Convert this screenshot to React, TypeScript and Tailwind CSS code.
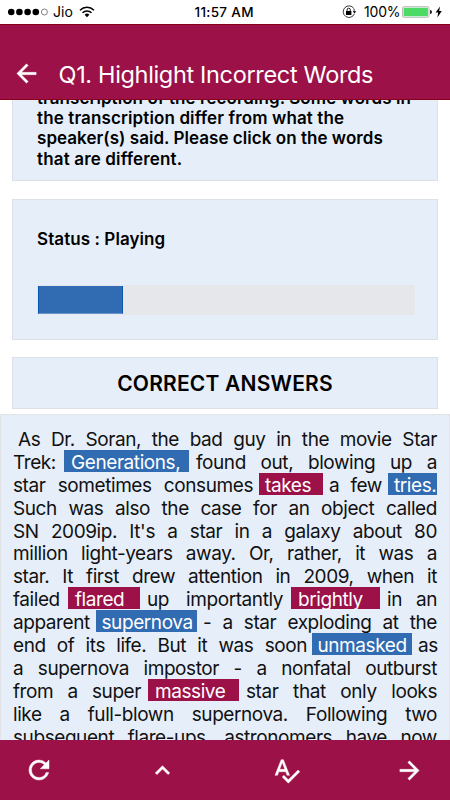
import React from "react";
import { MdArrowBack, MdArrowForward, MdExpandLess, MdRefresh, MdSpellcheck } from "react-icons/md";

type Part = { text: string; gap?: number; width: number; mark?: "blue" | "red"; pad?: number };

const lines: Part[][] = [
  [{ text: "As Dr. Soran, the bad guy in the movie Star", gap: 5, width: 419 }],
  [
    { text: "Trek:", width: 42 },
    { text: "Generations,", gap: 9, width: 125, mark: "blue", pad: 7 },
    { text: "found out, blowing up a", gap: 7, width: 241 },
  ],
  [
    { text: "star sometimes consumes", width: 240 },
    { text: "takes", gap: 6, width: 64, mark: "red", pad: 6 },
    { text: "a few", gap: 6, width: 53 },
    { text: "tries.", gap: 6, width: 49, mark: "blue", pad: 6 },
  ],
  [{ text: "Such was also the case for an object called", width: 424 }],
  [{ text: "SN 2009ip. It's a star in a galaxy about 80", width: 424 }],
  [{ text: "million light-years away. Or, rather, it was a", width: 424 }],
  [{ text: "star. It first drew attention in 2009, when it", width: 424 }],
  [
    { text: "failed", width: 47 },
    { text: "flared", gap: 8, width: 72, mark: "red", pad: 7 },
    { text: "up importantly", gap: 7, width: 136 },
    { text: "brightly", gap: 8, width: 89, mark: "red", pad: 7 },
    { text: "in an", gap: 7, width: 50 },
  ],
  [
    { text: "apparent", width: 78 },
    { text: "supernova", gap: 5, width: 101, mark: "blue", pad: 5.5 },
    { text: "- a star exploding at the", gap: 6, width: 234 },
  ],
  [
    { text: "end of its life. But it was soon", width: 294 },
    { text: "unmasked", gap: 5, width: 100, mark: "blue", pad: 5.5 },
    { text: "as", gap: 6, width: 19 },
  ],
  [{ text: "a supernova impostor - a nonfatal outburst", width: 424 }],
  [
    { text: "from a super", width: 128 },
    { text: "massive", gap: 7, width: 91, mark: "red", pad: 7 },
    { text: "star that only looks", gap: 7, width: 191 },
  ],
  [{ text: "like a full-blown supernova. Following two", width: 424 }],
  [{ text: "subsequent flare-ups, astronomers have now", width: 424 }],
];

const markClass = { blue: "bg-[#316bb1] text-white", red: "bg-[#9c1147] text-white" };

function StatusBar() {
  return (
    <div className="flex h-6 shrink-0 items-center bg-white pl-2 text-[14px] leading-6 text-black">
      <svg width="41" height="8" viewBox="0 0 41 8">
        {[3.2, 11.4, 19.6, 27.8].map((x) => (
          <circle key={x} cx={x} cy="4" r="3.3" />
        ))}
        <circle cx="36.4" cy="4" r="3" fill="none" stroke="#333" strokeWidth=".6" />
      </svg>
      <span className="ml-1 w-[22px] whitespace-nowrap">Jio</span>
      <svg className="ml-[4px]" width="16" height="12" viewBox="0 0 16 12">
        <path d="M1 4.2A10 10 0 0 1 15 4.2M3.5 6.8a6.4 6.4 0 0 1 9 0" fill="none" stroke="#000" strokeWidth="1.5" />
        <path d="M5.6 8.7a3.5 3.5 0 0 1 4.8 0L8 11.3Z" />
      </svg>
      <span className="ml-[99.5px] w-[66px] whitespace-nowrap text-[13.5px] font-medium tracking-[0.3px]">11:57 AM</span>
      <svg className="ml-[81.5px]" width="16" height="14" viewBox="0 0 16 14">
        <path d="M11.8 3.4A5.8 5.8 0 1 0 12.4 8.8" fill="none" stroke="#222" strokeWidth=".9" />
        <path d="M12.1 3.8v3" stroke="#222" strokeWidth=".9" />
        <path d="M10.8 6.2h3.4L12.5 8.4Z" />
        <rect x="4" y="6" width="5.4" height="4" />
        <path d="M5.1 6V4.8a1.6 1.6 0 0 1 3.2 0V6" fill="none" stroke="#000" strokeWidth=".9" />
      </svg>
      <span className="ml-[6px] w-[37px] whitespace-nowrap tracking-[-0.2px]">100%</span>
      <svg className="ml-[1px]" width="31" height="12" viewBox="0 0 31 12">
        <rect x=".5" y=".7" width="26.5" height="10.6" rx="1.5" fill="#fff" stroke="#999" strokeWidth=".7" />
        <rect x="1.6" y="1.8" width="24.3" height="8.4" rx=".5" fill="#4cd964" />
        <path d="M28 4a2 2 0 0 1 0 4Z" fill="#222" />
      </svg>
      <svg className="ml-[2px]" width="8" height="12" viewBox="0 0 8 12">
        <path d="M5 .4 .6 6.6h2.6L2.4 11.4 6.8 5.1H4.2Z" />
      </svg>
    </div>
  );
}

export default function App() {
  return (
    <div className="flex h-[800px] w-[450px] flex-col overflow-hidden bg-white font-['Inter',sans-serif] text-black">
      <StatusBar />
      <header className="flex h-[76px] shrink-0 items-end border-y border-[#87001c] bg-[#9c1147] pb-[10px] pl-[12px] text-white">
        <MdArrowBack className="mb-px stroke-white [stroke-width:0.3] [&>path[fill=none]]:stroke-none" size={29} />
        <h1 className="ml-[17.5px] whitespace-nowrap text-[23.5px] leading-[29px] tracking-[-0.34px]">Q1. Highlight Incorrect Words</h1>
      </header>

      <main className="flex min-h-0 flex-1 flex-col overflow-hidden">
        <section className="mx-3 h-[81px] shrink-0 overflow-hidden border border-t-0 border-[#dce0e7] bg-[#e6eefa] pl-6">
          <div className="-mt-[12px] whitespace-nowrap text-[17px] font-semibold leading-[20.2px] tracking-[0.04px]">
            <p className="tracking-[0.07px]">transcription of the recording. Some words in</p>
            <p className="tracking-[0.12px]">the transcription differ from what the</p>
            <p>speaker(s) said. Please click on the words</p>
            <p className="tracking-[0.15px]">that are different.</p>
          </div>
        </section>

        <section className="mx-3 mt-[18px] h-[141px] shrink-0 border border-[#dce0e7] bg-[#e6eefa] px-6 pt-[29px]">
          <p className="whitespace-nowrap text-[17px] font-semibold leading-5 tracking-[0.08px]">Status : Playing</p>
          <div className="mt-[36px] h-[30px] w-[378px] bg-[#e5e7eb] py-px pl-px">
            <div className="h-7 w-[85px] border-x border-b border-x-[#0758ac] border-b-[#6b96cf] bg-[#316bb1]" />
          </div>
        </section>

        <section className="mx-3 mt-[17px] flex h-[52px] shrink-0 items-center justify-center border border-[#dce0e7] bg-[#e6eefa] pt-[2px]">
          <h2 className="whitespace-nowrap text-[21px] font-semibold leading-6 tracking-[0.2px]">CORRECT ANSWERS</h2>
        </section>

        <section className="mt-[5px] min-h-0 flex-1 overflow-hidden border border-b-0 border-[#e2e3e7] bg-[#e6eefa] pl-3 pt-[12px] text-[19px] tracking-[-0.42px] text-[#111]">
          {lines.map((line, i) => (
            <div key={i} className="flex h-[22.9px] whitespace-nowrap leading-[22.9px]">
              {line.map((p, j) => (
                <span
                  key={j}
                  className={`block h-[22px] shrink-0 leading-[25px] [text-align-last:justify] ${p.mark ? markClass[p.mark] + " [text-align-last:left]!" : ""}`}
                  style={{ width: p.width, marginLeft: p.gap ?? 0, paddingLeft: p.pad ?? 0 }}
                >
                  {p.text}
                </span>
              ))}
            </div>
          ))}
        </section>
      </main>

      <footer className="flex h-[60px] shrink-0 items-center bg-[#9c1147] pl-[24px] text-white">
        <MdRefresh className="stroke-white [stroke-width:0.35] [&>path[fill=none]]:stroke-none" size={30} />
        <MdExpandLess className="ml-[94px] stroke-white [stroke-width:0.4] [&>path[fill=none]]:stroke-none" size={29} />
        <MdSpellcheck className="ml-[95px] stroke-white [stroke-width:0.35] [&>path[fill=none]]:stroke-none" size={29} />
        <MdArrowForward className="ml-[94px] stroke-white [stroke-width:0.3] [&>path[fill=none]]:stroke-none" size={29} />
      </footer>
    </div>
  );
}
